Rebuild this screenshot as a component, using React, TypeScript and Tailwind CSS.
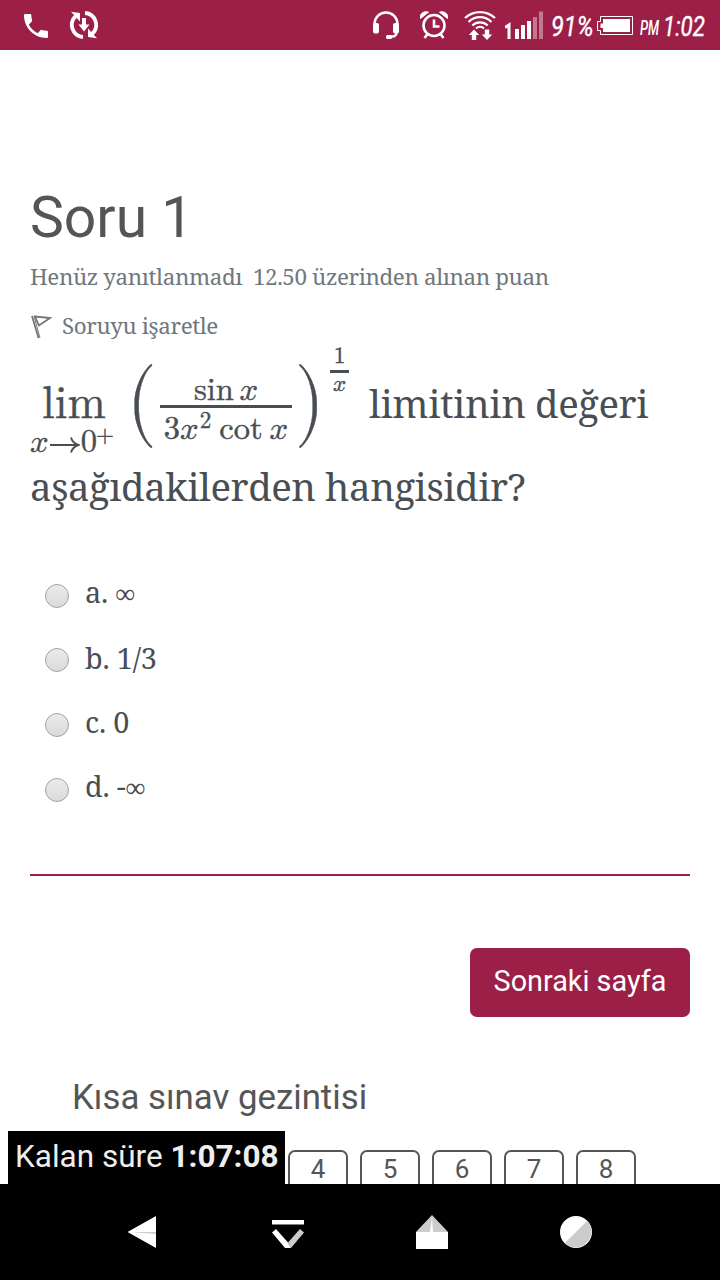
import type { ReactNode } from "react";

const SERIF = "font-['Noto_Serif','DejaVu_Serif_Condensed','DejaVu_Serif',serif]";
const MATH = "font-['Latin_Modern_Math','Liberation_Serif',serif] [-webkit-text-stroke:0.4px_#494e54]";

function StatusBar() {
  return (
    <header className="flex h-[50px] shrink-0 items-center bg-[#9b1f47] text-white">
      <svg className="ml-[20px] mt-[1px] h-[32px] w-[32px]" viewBox="0 0 24 24" fill="currentColor">
        <path d="M6.6 10.8c1.4 2.8 3.8 5.1 6.6 6.6l2.2-2.2c.3-.3.7-.4 1-.2 1.1.4 2.3.6 3.6.6.6 0 1 .4 1 1V20c0 .6-.4 1-1 1C10.600 21 3 13.400 3 4c0-.6.400-1 1-1h3.500c.6 0 1 .4 1 1 0 1.300.2 2.500.6 3.600.1.300 0 .700-.2 1z" />
      </svg>
      <svg className="ml-[17px] h-[30px] w-[30px]" viewBox="0 0 30 30">
        <g fill="none" stroke="white" strokeWidth="3.800">
          <path d="M14 27A12 12 0 0 1 7 6" />
          <path d="M16 3A12 12 0 0 1 23 24" />
        </g>
        <path d="M2 1.800L11 3V11.500zM28 28.200L19 27V18.500zM13 8h4v6.500h3.500L15 21.500 9.500 14.500H13z" fill="white" />
      </svg>
      <div className="ml-auto flex items-center">
        <svg className="h-[30px] w-[28px]" viewBox="0 0 28 30" fill="white">
          <path d="M2.500 19v-5a11.500 11.500 0 0 1 23 0v5M24.500 21v1.500a4 4 0 0 1-4 4H15" fill="none" stroke="white" strokeWidth="2.500" />
          <rect x="1" y="13" width="6" height="10.500" rx="2" />
          <rect x="21" y="13" width="6" height="10.500" rx="2" />
          <rect x="14" y="25" width="6" height="4" rx="1.500" />
        </svg>
        <svg className="ml-[20px] h-[30px] w-[28px]" viewBox="0 0 28 30" fill="none" stroke="white">
          <circle cx="14" cy="15.500" r="10.500" strokeWidth="2.600" />
          <path d="M14 9.500v7h5.500" strokeWidth="2.600" />
          <path d="M7.500 24l-3 4M20.500 24l3 4" strokeWidth="2.600" />
          <path d="M.5 8.500C-1 4 4 .5 8.500 2.200zM27.500 8.500C29 4 24 .5 19.500 2.200z" fill="white" strokeWidth="1" />
        </svg>
        <svg className="ml-[15px] mb-[2px] h-[32px] w-[34px]" viewBox="0 0 34 32" fill="none" stroke="white" strokeWidth="2.200">
          <path d="M2 10a22 22 0 0 1 30 0M5.500 14a16 16 0 0 1 23 0M9.300 17.500a11 11 0 0 1 15.400 0M13 20.500a6 6 0 0 1 8 0" />
          <path d="M11 21.500l5.200 5.500h-3V32H8.800v-5H5.800zM24 32l-5.200-5.500h3V21.500h4.400v5h3z" fill="white" stroke="none" />
        </svg>
        <svg className="ml-[8px] mb-[2px] h-[32px] w-[40px]" viewBox="0 0 40 32" fill="white">
          <path d="M0 19.500l4-2.500V31" fill="none" stroke="white" strokeWidth="3" />
          <path d="M10 21h4v10h-4zM16 17h4V31h-4zM22 13h4V31h-4z" />
          <path d="M28 9h4v22h-4zM34 3.500h4V31h-4z" opacity=".4" />
        </svg>
        <span className="ml-[6px] block h-[32px] w-[45px] origin-left scale-x-[.84] whitespace-nowrap font-['Roboto',sans-serif] text-[28px] italic leading-[35px] [-webkit-text-stroke:0.4px_white]">91%</span>
        <svg className="ml-[1px] mt-[2px] h-[20px] w-[38px]" viewBox="0 0 38 20">
          <path d="M3.500 .5h32v18h-32v-4h-3v-9h3z" fill="none" stroke="white" />
          <path d="M6 3h27v13H6v-4H3.500V7.500H6z" fill="white" />
        </svg>
        <span className="ml-[5px] block h-[32px] w-[20px] origin-left scale-x-[.62] whitespace-nowrap font-['Roboto',sans-serif] text-[21px] font-medium italic leading-[38px]">PM</span>
        <span className="ml-[3px] mr-[16px] block h-[32px] w-[41px] origin-left scale-x-[.8] whitespace-nowrap font-['Roboto',sans-serif] text-[28px] italic leading-[35px] [-webkit-text-stroke:0.4px_white]">1:02</span>
      </div>
    </header>
  );
}

function Formula() {
  return (
    <div className={`-mt-px flex h-[120px] w-[339px] shrink-0 items-start text-[#494e54] ${MATH}`}>
      <div className="flex w-[88px] flex-col items-center pt-[38px]">
        <span className="text-[46px] leading-[44px]">lim</span>
        <span className="-mt-px flex h-[34px] w-[88px] items-start whitespace-nowrap text-[32.600px] leading-[34px]">
          𝑥
          <svg className="mr-[1px] mt-[11px] h-[18px] w-[31px]" viewBox="0 0 31 18" fill="none" stroke="currentColor" strokeWidth="1.900">
            <path d="M1 9h28M22 1.500c1 3.500 4 6.500 7.500 7.500-3.500 1-6.500 4-7.500 7.500" />
          </svg>
          0
          <span className="-ml-px block h-[20px] text-[23px] leading-[20px]">+</span>
        </span>
      </div>
      <span className="ml-[9px] mt-[15px] block h-[84px] w-[33px] origin-left scale-x-[.9] text-[84px] leading-[85px]">(</span>
      <div className="flex w-[132px] flex-col items-center pt-[29px]">
        <span className="h-[32px] whitespace-nowrap text-[32.600px] leading-[34px]">sin&#8198;𝑥</span>
        <span className="h-[3px] w-full bg-[#494e54]" />
        <span className="flex whitespace-nowrap text-[32.600px] leading-[42px]">
          3𝑥<span className="ml-[1px] text-[23px] leading-[25px]">2</span>
          <span className="ml-[8px]">cot</span>
          <span className="ml-[7px]">𝑥</span>
        </span>
      </div>
      <span className="ml-[3px] mt-[15px] block h-[84px] w-[28px] origin-left scale-x-[.9] text-[84px] leading-[85px]">)</span>
      <div className="ml-[7px] flex w-[19px] flex-col items-center">
        <span className="h-[27px] text-[23.500px] leading-[25px]">1</span>
        <span className="-mt-[1px] h-[3px] w-full bg-[#494e54]" />
        <span className="text-[23px] leading-[22px]">𝑥</span>
      </div>
    </div>
  );
}

function Option({ children }: { children: ReactNode }) {
  return (
    <label className="flex h-[64.600px] items-center">
      <span className="mt-[5px] h-[24px] w-[24px] rounded-full border border-[#a2a2a2] bg-linear-to-b from-[#ebebeb] to-[#dadada]" />
      <span className="ml-[16px] whitespace-nowrap text-[28.800px] leading-[40px] tracking-[-.2px]">{children}</span>
    </label>
  );
}

function Infinity() {
  return <span className="font-['Liberation_Serif',serif] text-[28px]">∞</span>;
}

function NavBar() {
  return (
    <nav className="flex h-[96px] shrink-0 items-center justify-between bg-black px-[126px]">
      <svg className="h-[36px] w-[36px]" viewBox="0 0 36 36">
        <path d="M1.500 18L30 2v32z" fill="white" />
        <path d="M5 18h25v2z" fill="#ccc" />
      </svg>
      <svg className="h-[36px] w-[36px]" viewBox="0 0 36 36">
        <path d="M2 6h32v4.500H2z" fill="white" />
        <path d="M2 18.500l4-3.500 12 13.500 3 5.500h-6z" fill="white" />
        <path d="M30 15l4 3.500L21 34l-3-5.500z" fill="#ccc" />
      </svg>
      <svg className="h-[36px] w-[36px]" viewBox="0 0 36 36">
        <path d="M2 18L18 1l16 17z" fill="#ccc" />
        <path d="M2 18h14L18 3l1 15h15v17H2z" fill="white" />
      </svg>
      <svg className="h-[36px] w-[36px]" viewBox="0 0 36 36">
        <circle cx="18" cy="18" r="16" fill="white" />
        <path d="M29.300 6.700a16 16 0 0 1-22.600 22.600z" fill="#ccc" />
      </svg>
    </nav>
  );
}

export default function App() {
  return (
    <div className="flex h-[1280px] w-[720px] flex-col overflow-hidden bg-white">
      <StatusBar />
      <main className={`relative h-[1134px] overflow-hidden px-[30px] pt-[136px] text-[#494e54] ${SERIF}`}>
        <h3 className="h-[64px] font-['Roboto',sans-serif] text-[57px] leading-[64px] text-[#555]">Soru 1</h3>
        <div className="mt-[9px] h-[36px] whitespace-pre text-[22.400px] leading-[36px] tracking-[-.390px] text-[#70777d]">Henüz yanıtlanmadı  12.50 üzerinden alınan puan</div>
        <div className="mt-[13px] flex h-[36px] items-center text-[22.400px] leading-[36px] tracking-[-.390px] text-[#70777d]">
          <svg className="mr-[10px] mt-[1px] h-[24px] w-[22px]" viewBox="0 0 22 24" fill="none" stroke="#777" strokeWidth="1.800">
            <path d="M2 1l6.500 22M5 1.500L20 3 9 10.500z" />
            <path d="M4 1l6 22" strokeWidth="1" />
          </svg>
          Soruyu işaretle
        </div>
        <div className="flex h-[120px] whitespace-nowrap pt-px">
          <Formula />
          <span className="mt-[30px] text-[38.400px] leading-[56px] tracking-[-.430px]">limitinin değeri</span>
        </div>
        <div className="-mt-[6px] h-[56px] whitespace-nowrap text-[38.400px] leading-[56px] tracking-[-.480px]">aşağıdakilerden hangisidir?</div>
        <div className="mt-[47px] pl-[15px]">
          <Option>a. <Infinity /></Option>
          <Option>b. 1/3</Option>
          <Option>c. 0</Option>
          <Option>d. -<Infinity /></Option>
        </div>
        <hr className="mt-[55px] h-[2px] border-0 bg-[#9b1f47]" />
        <button className="ml-auto mt-[72px] block h-[69px] w-[220px] rounded-[7px] bg-[#9b1f47] pb-[3px] font-['Roboto',sans-serif] text-[28.800px] text-white">Sonraki sayfa</button>
        <h4 className="mt-[58px] h-[44px] whitespace-nowrap pl-[42px] font-['Roboto',sans-serif] text-[34.800px] leading-[44px] text-[#555]">Kısa sınav gezintisi</h4>
        <div className="mt-[31px] flex gap-3 pl-[258px] font-['Roboto',sans-serif] text-[26px] text-[#555]">
          {[4, 5, 6, 7, 8].map((n) => (
            <span key={n} className="h-[60px] w-[60px] rounded-[7px] border-2 border-[#555] text-center leading-[35px]">{n}</span>
          ))}
        </div>
        <div className="absolute bottom-0 left-[8px] h-[53px] w-[277px] whitespace-nowrap bg-black pl-[7px] font-['Roboto',sans-serif] text-[31.500px] leading-[52px] text-[#eee]">
          Kalan süre <b>1:07:08</b>
        </div>
      </main>
      <NavBar />
    </div>
  );
}
